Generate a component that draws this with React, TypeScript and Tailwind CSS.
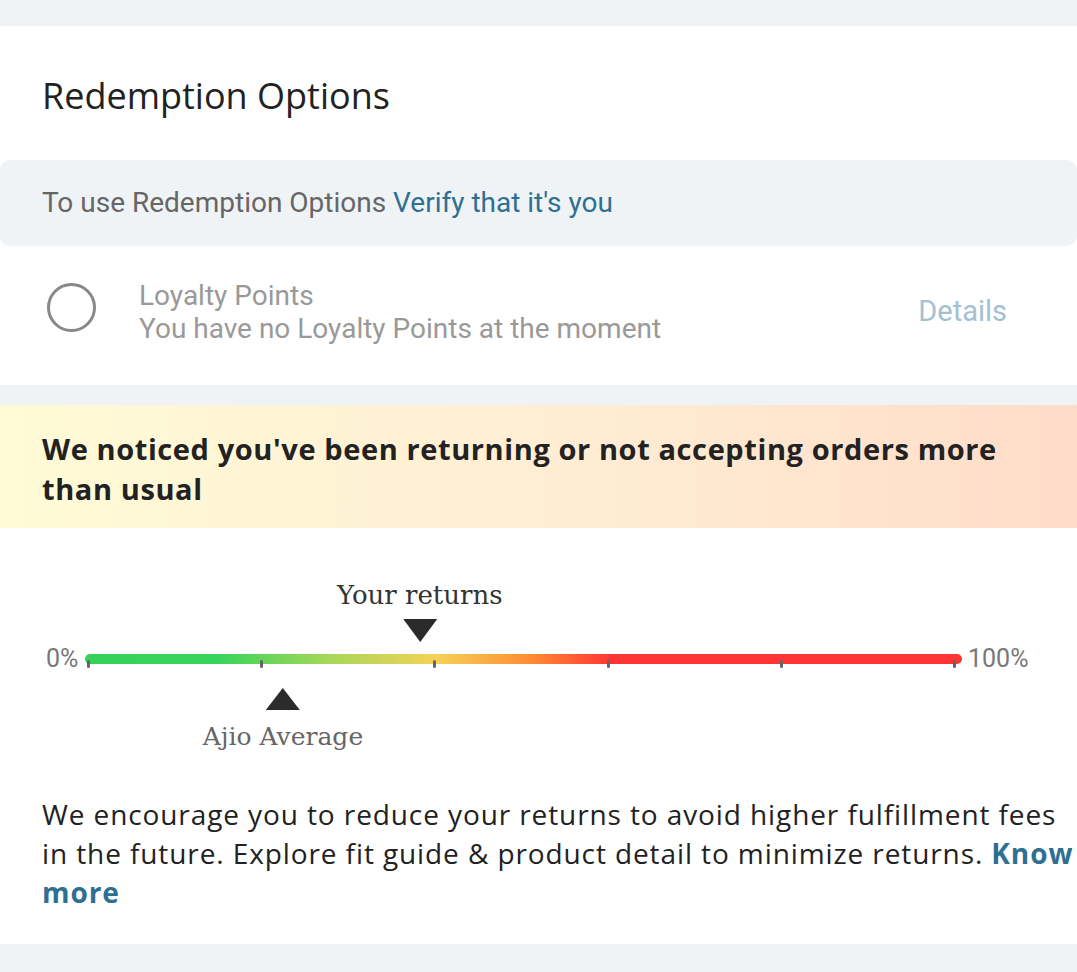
import React from "react";

const ticks = [0, 20, 40, 60, 80, 100];

function ReturnsScale({ yours, average }: { yours: number; average: number }) {
  return (
    <div className="relative h-[200px] font-['DejaVu_Serif',serif]">
      {/* your returns marker */}
      <div
        className="absolute top-[14px] flex -translate-x-1/2 flex-col items-center"
        style={{ left: `calc(89px + ${yours} * 8.66px)` }}
      >
        <span className="text-[26px] leading-[36px] text-[#333] whitespace-nowrap">Your returns</span>
        <span className="mt-[6px] h-0 w-0 border-x-[17px] border-t-[23px] border-x-transparent border-t-[#2b2b2b]" />
      </div>

      {/* bar */}
      <div className="absolute left-0 right-0 top-[84px] flex items-center pl-[46px]">
        <span className="w-[39px] font-['Roboto',sans-serif] text-[25px] leading-[24px] text-[#777]">0%</span>
        <div className="relative h-[10px] w-[877px] rounded-full bg-[linear-gradient(to_right,#34d258_0%,#36d45a_15%,#a8d758_28%,#f5d257_40%,#ff8a33_51%,#ff3535_60%,#ff3535_100%)]">
          {ticks.map((t) => (
            <span
              key={t}
              className="absolute top-[6px] h-[8px] w-[3px] rounded-sm bg-[#666]"
              style={{ left: `calc(3px + ${t} * 8.66px - 1px)` }}
            />
          ))}
        </div>
        <span className="ml-[6px] font-['Roboto',sans-serif] text-[25px] leading-[24px] text-[#777]">100%</span>
      </div>

      {/* ajio average marker */}
      <div
        className="absolute top-[125px] flex -translate-x-1/2 flex-col items-center"
        style={{ left: `calc(89px + ${average} * 8.66px)` }}
      >
        <span className="h-0 w-0 border-x-[17px] border-b-[22px] border-x-transparent border-b-[#2b2b2b]" />
        <span className="mt-[9px] text-[25px] leading-[36px] text-[#666] whitespace-nowrap">Ajio Average</span>
      </div>
    </div>
  );
}

export default function App() {
  return (
    <div className="min-h-[972px] w-[1077px] bg-[#eff3f6] font-['Open_Sans',sans-serif]">
      <div className="h-[26px]" />

      <section className="bg-white">
        <h2 className="px-[42px] pt-[48px] pb-[42px] text-[36px] leading-[44px] font-normal text-[#222]">
          Redemption Options
        </h2>

        <div className="flex h-[86px] items-center rounded-[10px] bg-[#eff3f6] px-[42px] font-['Roboto',sans-serif] text-[28px] text-[#666]">
          <span>
            To use Redemption Options <span className="text-[#2e6f92]">Verify that it's you</span>
          </span>
        </div>

        <div className="flex h-[139px] items-center pb-[8px] pl-[47px] pr-[70px] font-['Roboto',sans-serif]">
          <span className="-mt-[8px] h-[49px] w-[49px] rounded-full border-[3px] border-[#888]" />
          <div className="ml-[43px] flex-1 text-[28px] leading-[33px] text-[#999]">
            <div>Loyalty Points</div>
            <div>You have no Loyalty Points at the moment</div>
          </div>
          <span className="text-[29px] text-[#a4c1d1]">Details</span>
        </div>
      </section>

      <div className="h-[20px]" />

      <section className="bg-[linear-gradient(to_right,#fffbd6,#ffeed4_50%,#ffdcc9)] px-[42px] pt-[24px] pb-[19px]">
        <p className="text-[29px] leading-[40px] font-bold tracking-[0.6px] text-[#222]">
          We noticed you've been returning or not accepting orders more than usual
        </p>
      </section>

      <section className="bg-white pt-[35px] pb-[32px]">
        <ReturnsScale yours={38.2} average={22.4} />

        <p className="mt-[32px] pl-[42px] text-[28px] leading-[39px] tracking-[0.9px] text-[#222]">
          We encourage you to reduce your returns to avoid higher fulfillment fees in the future. Explore fit
          guide &amp; product detail to minimize returns.{" "}
          <span className="font-bold text-[#2e6f92]">Know more</span>
        </p>
      </section>
    </div>
  );
}
